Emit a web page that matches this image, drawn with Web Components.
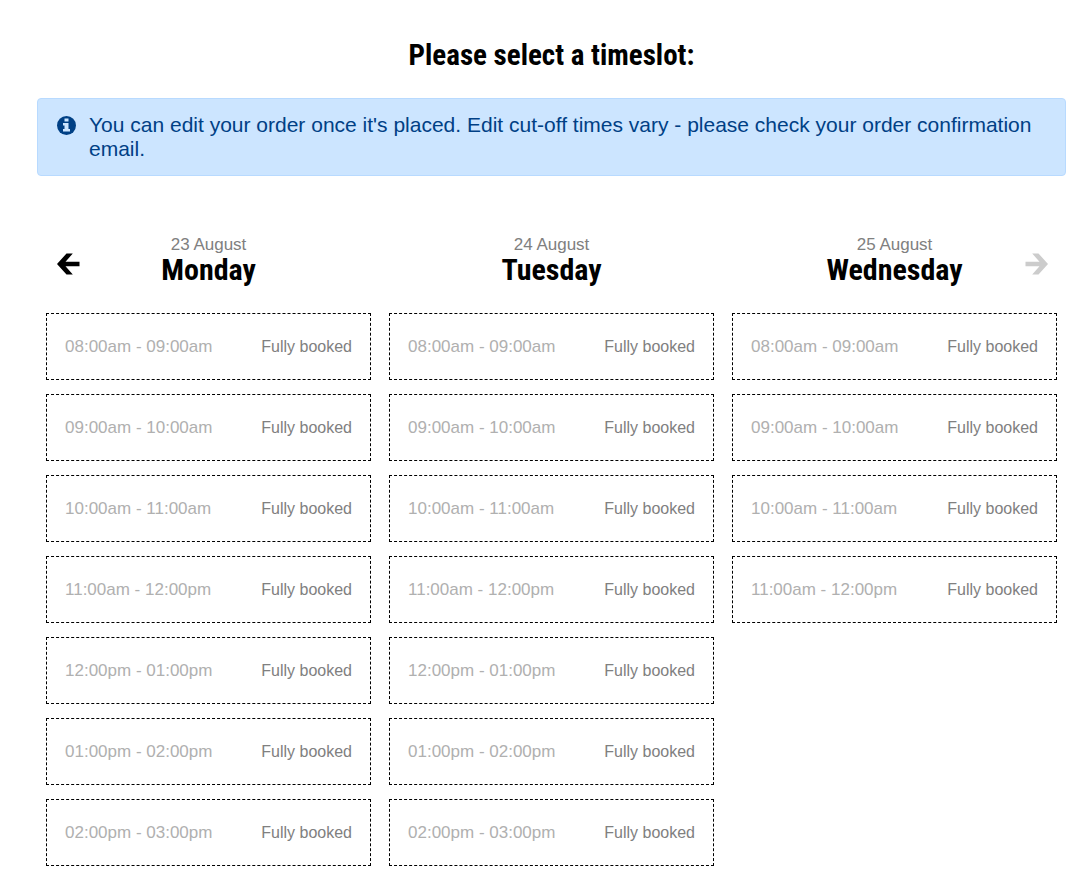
<!DOCTYPE html>
<html lang="en">
<head>
  <meta charset="UTF-8">
  <meta name="viewport" content="width=device-width, initial-scale=1.0">
  <title>Select a timeslot</title>
  <style>
    body {
      margin: 0;
      background: #fff;
      color: #000;
      font-family: "Liberation Sans", Arial, sans-serif;
    }
  </style>
</head>
<body>
  <timeslot-page>
    <span slot="title">Please select a timeslot:</span>
    <info-alert slot="notice">You can edit your order once it's placed. Edit cut-off times vary - please check your order confirmation email.</info-alert>
    <slot-picker></slot-picker>
  </timeslot-page>

  <script>
    class TimeslotPage extends HTMLElement {
      connectedCallback() {
        this.attachShadow({ mode: 'open' });
        this.shadowRoot.innerHTML = `
          <style>
            :host { display: block; }
            main { padding: 40px 14px 0 37px; }
            h1 {
              margin: 0 0 28px;
              font: bold 29px/30px "Liberation Sans Narrow", "Roboto Condensed", sans-serif;
              text-align: center;
            }
          </style>
          <main>
            <h1><slot name="title"></slot></h1>
            <slot name="notice"></slot>
            <slot></slot>
          </main>
        `;
      }
    }

    class InfoAlert extends HTMLElement {
      connectedCallback() {
        this.attachShadow({ mode: 'open' });
        this.shadowRoot.innerHTML = `
          <style>
            :host { display: block; margin-bottom: 60px; }
            .alert {
              display: flex;
              gap: 13px;
              padding: 14px 19px;
              border: 1px solid #b8daff;
              border-radius: 4px;
              background: #cce5ff;
              color: #004085;
              font-size: 21px;
              line-height: 24px;
            }
            svg { flex: none; width: 19px; height: 24px; }
            p { margin: 0; }
          </style>
          <div class="alert" role="alert">
            <svg viewBox="0 0 19 24" aria-hidden="true">
              <circle cx="9.5" cy="12.5" r="9.5" fill="#004085"/>
              <path fill="#cce5ff" d="M7.500 5.500h4v3h-4zM6 10h5.500v6H13v2.500H6V16h1.500v-3.500H6z"/>
            </svg>
            <p><slot></slot></p>
          </div>
        `;
      }
    }

    class TimeSlot extends HTMLElement {
      connectedCallback() {
        this.attachShadow({ mode: 'open' });
        this.shadowRoot.innerHTML = `
          <style>
            :host {
              display: flex;
              align-items: center;
              justify-content: space-between;
              box-sizing: border-box;
              padding: 22px 18px;
              border: 1px dashed #000;
              line-height: 21px;
            }
            .time { color: #b0b0b0; font-size: 17px; }
            .status { color: #808080; font-size: 16px; }
          </style>
          <span class="time"><slot></slot></span>
          <span class="status"><slot name="status"></slot></span>
        `;
      }
    }

    class DayColumn extends HTMLElement {
      connectedCallback() {
        const times = this.getAttribute('times').split(',');
        this.attachShadow({ mode: 'open' });
        this.shadowRoot.innerHTML = `
          <style>
            :host { display: block; padding: 0 9px; }
            header { margin-bottom: 28px; text-align: center; }
            .date { margin: 0; color: #808080; font-size: 17px; line-height: 18px; }
            h2 {
              margin: 0;
              font: bold 30px/31px "Liberation Sans Narrow", "Roboto Condensed", sans-serif;
            }
            ul { display: flex; flex-direction: column; gap: 14px; margin: 0; padding: 0; list-style: none; }
          </style>
          <header>
            <p class="date">${this.getAttribute('date')}</p>
            <h2>${this.getAttribute('day')}</h2>
          </header>
          <ul>
            ${times.map(t => `<li><time-slot>${t}<span slot="status">Fully booked</span></time-slot></li>`).join('')}
          </ul>
        `;
      }
    }

    class SlotPicker extends HTMLElement {
      connectedCallback() {
        const morning = ['08:00am - 09:00am', '09:00am - 10:00am', '10:00am - 11:00am', '11:00am - 12:00pm'];
        const allDay = [...morning, '12:00pm - 01:00pm', '01:00pm - 02:00pm', '02:00pm - 03:00pm'];
        const days = [
          { date: '23 August', day: 'Monday', times: allDay },
          { date: '24 August', day: 'Tuesday', times: allDay },
          { date: '25 August', day: 'Wednesday', times: morning }
        ];
        this.attachShadow({ mode: 'open' });
        this.shadowRoot.innerHTML = `
          <style>
            :host { display: block; position: relative; }
            .days { display: grid; grid-template-columns: repeat(3, 1fr); }
            /* arrows lie over the outer day headers */
            button {
              position: absolute;
              top: 17px;
              padding: 0;
              border: 0;
              background: none;
              color: #000;
              cursor: pointer;
            }
            button:disabled { color: #ccc; cursor: default; }
            .prev { left: 20px; }
            .next { right: 18px; }
            svg { display: block; width: 23px; height: 22px; }
          </style>
          <div class="days">
            ${days.map(d => `<day-column date="${d.date}" day="${d.day}" times="${d.times}"></day-column>`).join('')}
          </div>
          <button class="prev" type="button" aria-label="Previous days">
            <svg viewBox="0 0 23 22"><path fill="currentColor" d="M0 11 9.500.5h6.300L8.500 8.800h14v4.400h-14l7.300 8.300H9.500z"/></svg>
          </button>
          <button class="next" type="button" aria-label="Next days" disabled>
            <svg viewBox="0 0 23 22"><path fill="currentColor" d="M23 11 13.500.5H7.200l7.300 8.300H.5v4.400h14l-7.300 8.300h6.300z"/></svg>
          </button>
        `;
      }
    }

    customElements.define('timeslot-page', TimeslotPage);
    customElements.define('info-alert', InfoAlert);
    customElements.define('time-slot', TimeSlot);
    customElements.define('day-column', DayColumn);
    customElements.define('slot-picker', SlotPicker);
  </script>
</body>
</html>
